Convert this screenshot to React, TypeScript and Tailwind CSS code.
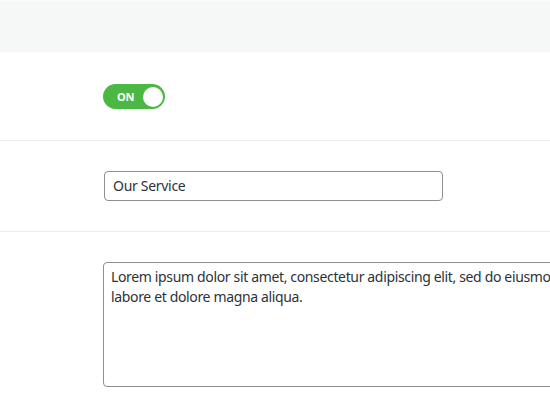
import React from "react";

export default function App() {
  const font = { fontFamily: '"Noto Sans", "Open Sans", sans-serif' };
  return (
    <div className="w-[550px] h-[416px] overflow-hidden bg-white text-[#2c3338]" style={font}>
      <div className="h-[53px] bg-[#f6f7f7] border-t border-[#fbfbfb] border-b border-[#e8e8e8]" />
      <div className="flex flex-col">
        <div className="h-[88px] border-b border-[#ebebeb] flex items-center pl-[103px]">
          <div className="w-[62px] h-[25px] rounded-full bg-[#4ab842] flex items-center justify-between pl-[14px] pr-[2px]">
            <span className="text-white text-[11px] font-bold leading-none tracking-tight">ON</span>
            <span className="w-[20px] h-[20px] rounded-full bg-white" />
          </div>
        </div>
        <div className="h-[91px] border-b border-[#ebebeb] pl-[104px] pt-[30px]">
          <div className="w-[339px] h-[30px] border border-[#8c8f94] rounded-[4px] flex items-center pl-[8px] text-[14px] leading-5 tracking-[-0.3px]">
            Our Service
          </div>
        </div>
        <div className="pl-[103px] pt-[30px]">
          <div className="w-[680px] h-[125px] border border-[#8c8f94] rounded-[4px] pl-[7px] pt-[4px] text-[14px] leading-[20px] tracking-[-0.35px] whitespace-nowrap">
            Lorem ipsum dolor sit amet, consectetur adipiscing elit, sed do eiusmod tempor incididunt ut
            <br />
            labore et dolore magna aliqua.
          </div>
        </div>
      </div>
    </div>
  );
}
